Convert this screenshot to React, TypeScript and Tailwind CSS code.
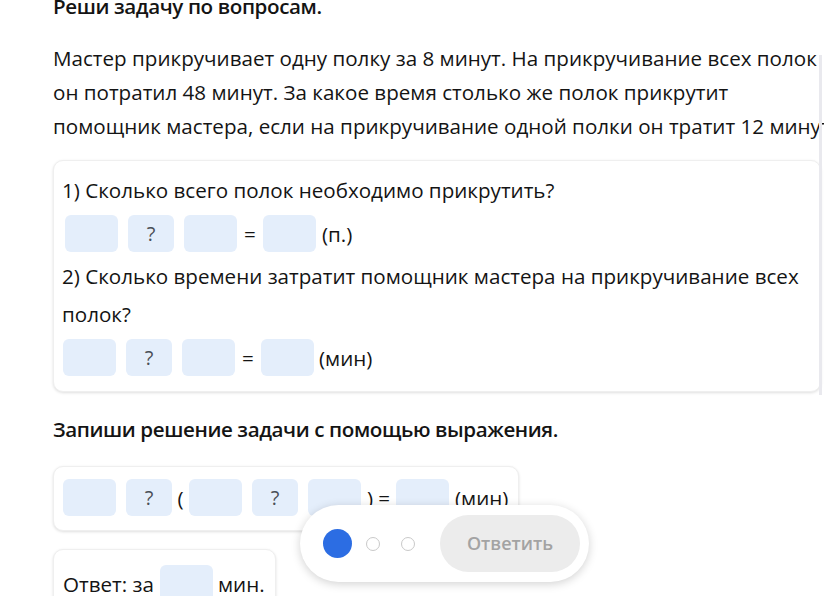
import React from 'react';

const font = { fontFamily: '"Open Sans", "Noto Sans", sans-serif' };

const Slot: React.FC<{ q?: boolean; w?: string }> = ({ q, w = 'w-[53px]' }) => (
  <div className={`${w} h-[37px] shrink-0 rounded-[6px] bg-[#e4eefb] flex items-center justify-center text-[20px] text-[#4a4f57]`}>
    {q ? '?' : ''}
  </div>
);

const Card: React.FC<{ className?: string; children: React.ReactNode }> = ({ className = '', children }) => (
  <div className={`rounded-[10px] border border-[#efefef] bg-white shadow-[0_1px_3px_rgba(0,0,0,0.13)] ${className}`}>
    {children}
  </div>
);

const problemLines = [
  'Мастер прикручивает одну полку за 8 минут. На прикручивание всех полок',
  'он потратил 48 минут. За какое время столько же полок прикрутит',
  'помощник мастера, если на прикручивание одной полки он тратит 12 минут.',
];

export default function App() {
  return (
    <div className="relative w-full h-[596px] overflow-hidden bg-white text-[#141414]" style={font}>
      <div className="pl-[53px] -mt-[11px] text-[20.6px] leading-[34px]">
        <h2 className="font-semibold tracking-[-0.4px] whitespace-nowrap">Реши задачу по вопросам.</h2>

        <div className="mt-[18px]">
          {problemLines.map(line => (
            <p key={line} className="whitespace-nowrap">{line}</p>
          ))}
        </div>

        <Card className="mt-[17px] w-[768px] pl-[8px] pt-[10px] pb-[15px]">
          <p className="leading-[38px] whitespace-nowrap">1) Сколько всего полок необходимо прикрутить?</p>
          <div className="mt-[6px] flex items-center pl-[3px]">
            <Slot />
            <div className="w-[10px]" />
            <Slot q w="w-[46px]" />
            <div className="w-[10px]" />
            <Slot />
            <span className="w-[26px] text-center">=</span>
            <Slot />
            <span className="ml-[6px]">(п.)</span>
          </div>
          <p className="mt-[5px] leading-[38px]">
            2) Сколько времени затратит помощник мастера на прикручивание всех
            <br />
            полок?
          </p>
          <div className="mt-[6px] flex items-center pl-[1px]">
            <Slot />
            <div className="w-[10px]" />
            <Slot q w="w-[46px]" />
            <div className="w-[10px]" />
            <Slot />
            <span className="w-[26px] text-center">=</span>
            <Slot />
            <span className="ml-[5px]">(мин)</span>
          </div>
        </Card>

        <h3 className="mt-[20px] font-semibold tracking-[-0.4px] whitespace-nowrap">Запиши решение задачи с помощью выражения.</h3>

        <Card className="mt-[20px] w-fit pl-[9px] pr-[10px] pt-[12px] pb-[14px]">
          <div className="flex items-center">
            <Slot />
            <div className="w-[10px]" />
            <Slot q w="w-[46px]" />
            <span className="w-[17px] text-center">(</span>
            <Slot />
            <div className="w-[10px]" />
            <Slot q w="w-[46px]" />
            <div className="w-[10px]" />
            <Slot />
            <span className="w-[35px] text-center whitespace-nowrap">) =</span>
            <Slot />
            <span className="ml-[6px]">(мин)</span>
          </div>
        </Card>

        <Card className="mt-[18px] w-fit pl-[9px] pr-[10px] pt-[15px] pb-[20px]">
          <div className="flex items-center">
            <span className="whitespace-nowrap">Ответ: за</span>
            <div className="w-[6px]" />
            <Slot />
            <span className="ml-[5px]">мин.</span>
          </div>
        </Card>
      </div>

      {/* edge of the side panel */}
      <div className="absolute left-[819px] top-[55px] w-[3px] h-[340px] bg-[#e9e9ee]" />

      {/* floating answer bar */}
      <div className="absolute left-[300px] top-[505px] w-[289px] h-[77px] rounded-full bg-white shadow-[0_2px_10px_rgba(0,0,0,0.18)] flex items-center pl-[23px] pr-[9px]">
        <div className="w-[29px] h-[29px] rounded-full bg-[#2c6de3]" />
        <div className="ml-[14px] w-[14px] h-[14px] rounded-full border-[1.5px] border-[#c9c9c9]" />
        <div className="ml-[21px] w-[14px] h-[14px] rounded-full border-[1.5px] border-[#c9c9c9]" />
        <button className="ml-auto w-[140px] h-[57px] rounded-full bg-[#ececec] text-[#a3a3a3] text-[18px] font-semibold">
          Ответить
        </button>
      </div>
    </div>
  );
}
